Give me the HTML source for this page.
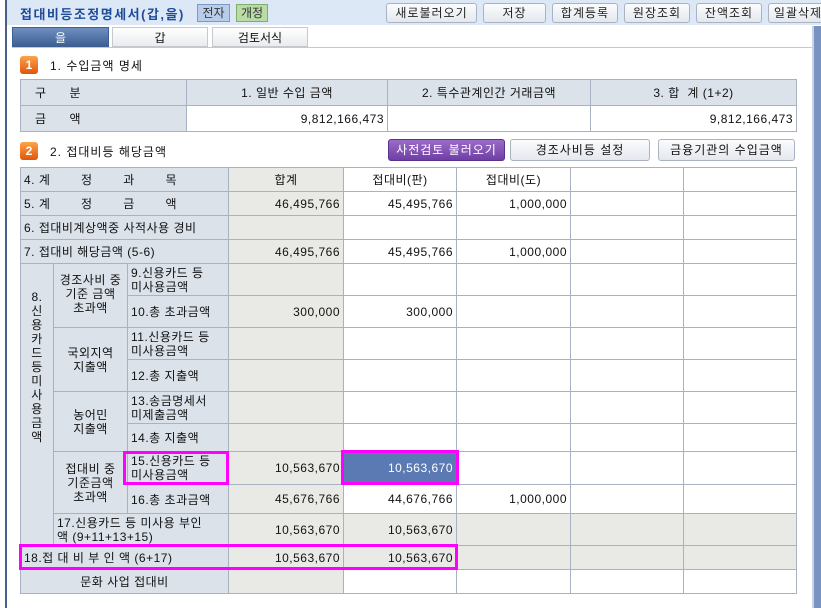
<!DOCTYPE html>
<html><head><meta charset="utf-8"><style>
*{margin:0;padding:0;box-sizing:border-box}
body{width:821px;height:608px;background:#fff;position:relative;overflow:hidden;font-family:"Liberation Sans","Noto Sans CJK KR",sans-serif;font-size:12px;color:#111}
.a{position:absolute}
.btn{position:absolute;top:3px;height:20px;border:1px solid #a9b3c2;border-radius:3px;background:linear-gradient(#fbfcfd,#e4e8ee);text-align:center;line-height:18px;font-size:12px;color:#222;letter-spacing:1px}
.tab{position:absolute;top:27px;height:20px;text-align:center;line-height:20px;border:1px solid #c6cad0;background:linear-gradient(#fff,#e9ebee)}
.ic{position:absolute;width:18px;height:18px;border-radius:3px;background:linear-gradient(#ffa24a,#e0560a);color:#fff;font-weight:bold;text-align:center;line-height:18px;font-size:12px}
table{position:absolute;border-collapse:collapse;table-layout:fixed}
td{border:1px solid #a9b2c3;padding:0 3px;white-space:nowrap;overflow:hidden;letter-spacing:0.5px}
.l{background:#dbe2ea}
.g{background:#e9eae6}
.r{text-align:right}
.c{text-align:center}
.t{line-height:14px}
.b2{position:absolute;top:139px;height:22px;border:1px solid #a9b3c2;border-radius:3px;background:linear-gradient(#fbfcfd,#e4e8ee);text-align:center;line-height:20px;letter-spacing:1px}
.mg{position:absolute;border:3px solid #ff00ff}
</style></head><body>
<div class="a" style="left:0;top:0;width:821px;height:25px;background:#dde8f7"></div>
<div class="a" style="left:0;top:0;width:7px;height:608px;background:#fff;border-right:2px solid #4a5f85"></div>
<div class="a" style="left:20px;top:4px;font-weight:bold;color:#1f4c9a;font-size:13px;letter-spacing:1.5px">접대비등조정명세서(갑,을)</div>
<div class="a" style="left:197px;top:4px;width:33px;height:18px;border:1px solid #7b9ac8;background:#b9cdea;text-align:center;line-height:16px;color:#333">전자</div>
<div class="a" style="left:236px;top:4px;width:32px;height:18px;border:1px solid #7fae6a;background:#b9dca6;text-align:center;line-height:16px;color:#333">개정</div>
<div class="btn" style="left:386px;width:91px">새로불러오기</div>
<div class="btn" style="left:483px;width:63px">저장</div>
<div class="btn" style="left:552px;width:66px">합계등록</div>
<div class="btn" style="left:624px;width:66px">원장조회</div>
<div class="btn" style="left:696px;width:66px">잔액조회</div>
<div class="btn" style="left:768px;width:60px">일괄삭제</div>
<div class="tab" style="left:12px;width:97px;background:linear-gradient(#6e8fbf,#3e5f92);color:#fff;border-color:#3e5f92">을</div>
<div class="tab" style="left:112px;width:96px">갑</div>
<div class="tab" style="left:212px;width:96px">검토서식</div>
<div class="a" style="left:12px;top:47px;width:800px;height:1px;background:#c4c8d0"></div>
<div class="a" style="left:812px;top:26px;width:9px;height:582px;background:#7892c2;border-left:2px solid #c9d3e6"></div>
<div class="ic" style="left:20px;top:56px">1</div>
<div class="a" style="left:50px;top:57px;letter-spacing:1px">1. 수입금액 명세</div>
<table style="left:20px;top:79px;width:776px">
<colgroup><col style="width:166px"><col style="width:201px"><col style="width:203px"><col style="width:206px"></colgroup>
<tr style="height:26px"><td class="l" style="padding-left:14px">구&nbsp;&nbsp;&nbsp;&nbsp;&nbsp;&nbsp;분</td><td class="l c">1. 일반 수입 금액</td><td class="l c">2. 특수관계인간 거래금액</td><td class="l c">3. 합&nbsp;&nbsp;계 (1+2)</td></tr>
<tr style="height:26px"><td class="l" style="padding-left:14px">금&nbsp;&nbsp;&nbsp;&nbsp;&nbsp;&nbsp;액</td><td class="r">9,812,166,473</td><td></td><td class="r">9,812,166,473</td></tr>
</table>
<div class="ic" style="left:20px;top:142px">2</div>
<div class="a" style="left:50px;top:143px;letter-spacing:1px">2. 접대비등 해당금액</div>
<div class="b2" style="left:388px;width:117px;background:linear-gradient(#9a6cc8,#6f3fa5);border-color:#5b3190;color:#fff">사전검토 불러오기</div>
<div class="b2" style="left:510px;width:140px">경조사비등 설정</div>
<div class="b2" style="left:658px;width:137px">금융기관의 수입금액</div>
<table style="left:20px;top:167px;width:776px">
<colgroup><col style="width:33px"><col style="width:74px"><col style="width:101px"><col style="width:115px"><col style="width:113px"><col style="width:114px"><col style="width:113px"><col style="width:113px"></colgroup>
<tr style="height:24px"><td class="l" colspan="3">4. 계&nbsp;&nbsp;&nbsp;&nbsp;&nbsp;&nbsp;&nbsp;&nbsp;정&nbsp;&nbsp;&nbsp;&nbsp;&nbsp;&nbsp;&nbsp;&nbsp;과&nbsp;&nbsp;&nbsp;&nbsp;&nbsp;&nbsp;&nbsp;&nbsp;목</td><td class="g c">합계</td><td class="c">접대비(판)</td><td class="c">접대비(도)</td><td></td><td></td></tr>
<tr style="height:24px"><td class="l" colspan="3">5. 계&nbsp;&nbsp;&nbsp;&nbsp;&nbsp;&nbsp;&nbsp;&nbsp;정&nbsp;&nbsp;&nbsp;&nbsp;&nbsp;&nbsp;&nbsp;&nbsp;금&nbsp;&nbsp;&nbsp;&nbsp;&nbsp;&nbsp;&nbsp;&nbsp;액</td><td class="g r">46,495,766</td><td class="r">45,495,766</td><td class="r">1,000,000</td><td></td><td></td></tr>
<tr style="height:24px"><td class="l" colspan="3">6. 접대비계상액중 사적사용 경비</td><td class="g"></td><td></td><td></td><td></td><td></td></tr>
<tr style="height:24px"><td class="l" colspan="3">7. 접대비 해당금액 (5-6)</td><td class="g r">46,495,766</td><td class="r">45,495,766</td><td class="r">1,000,000</td><td></td><td></td></tr>
<tr style="height:32px"><td class="l c" rowspan="9" style="padding:0;vertical-align:top;line-height:14px"><div style="margin-top:26px">8.<br>신<br>용<br>카<br>드<br>등<br>미<br>사<br>용<br>금<br>액</div></td><td class="l c t" rowspan="2" style="vertical-align:top;padding-top:9px">경조사비 중<br>기준 금액<br>초과액</td><td class="l t">9.신용카드 등<br>미사용금액</td><td class="g"></td><td></td><td></td><td></td><td></td></tr>
<tr style="height:32px"><td class="l">10.총 초과금액</td><td class="g r">300,000</td><td class="r">300,000</td><td></td><td></td><td></td></tr>
<tr style="height:32px"><td class="l c t" rowspan="2">국외지역<br>지출액</td><td class="l t">11.신용카드 등<br>미사용금액</td><td class="g"></td><td></td><td></td><td></td><td></td></tr>
<tr style="height:32px"><td class="l">12.총 지출액</td><td class="g"></td><td></td><td></td><td></td><td></td></tr>
<tr style="height:32px"><td class="l c t" rowspan="2">농어민<br>지출액</td><td class="l t">13.송금명세서<br>미제출금액</td><td class="g"></td><td></td><td></td><td></td><td></td></tr>
<tr style="height:28px"><td class="l">14.총 지출액</td><td class="g"></td><td></td><td></td><td></td><td></td></tr>
<tr style="height:33px"><td class="l c t" rowspan="2">접대비 중<br>기준금액<br>초과액</td><td class="l t">15.신용카드 등<br>미사용금액</td><td class="g r">10,563,670</td><td class="r" style="background:#5b79b3;color:#fff">10,563,670</td><td></td><td></td><td></td></tr>
<tr style="height:29px"><td class="l">16.총 초과금액</td><td class="g r">45,676,766</td><td class="r">44,676,766</td><td class="r">1,000,000</td><td></td><td></td></tr>
<tr style="height:32px"><td class="l t" colspan="2">17.신용카드 등 미사용 부인<br>액 (9+11+13+15)</td><td class="g r">10,563,670</td><td class="g r">10,563,670</td><td class="g"></td><td class="g"></td><td class="g"></td></tr>
<tr style="height:24px"><td class="l" colspan="3">18.접 대 비 부 인 액 (6+17)</td><td class="g r">10,563,670</td><td class="g r">10,563,670</td><td class="g"></td><td class="g"></td><td class="g"></td></tr>
<tr style="height:24px"><td class="l c" colspan="3">문화 사업 접대비</td><td class="g"></td><td></td><td></td><td></td><td></td></tr>
</table>
<div class="mg" style="left:123px;top:451px;width:106px;height:34px"></div>
<div class="mg" style="left:341px;top:450px;width:118px;height:35px"></div>
<div class="mg" style="left:19px;top:544px;width:439px;height:26px"></div>
</body></html>
